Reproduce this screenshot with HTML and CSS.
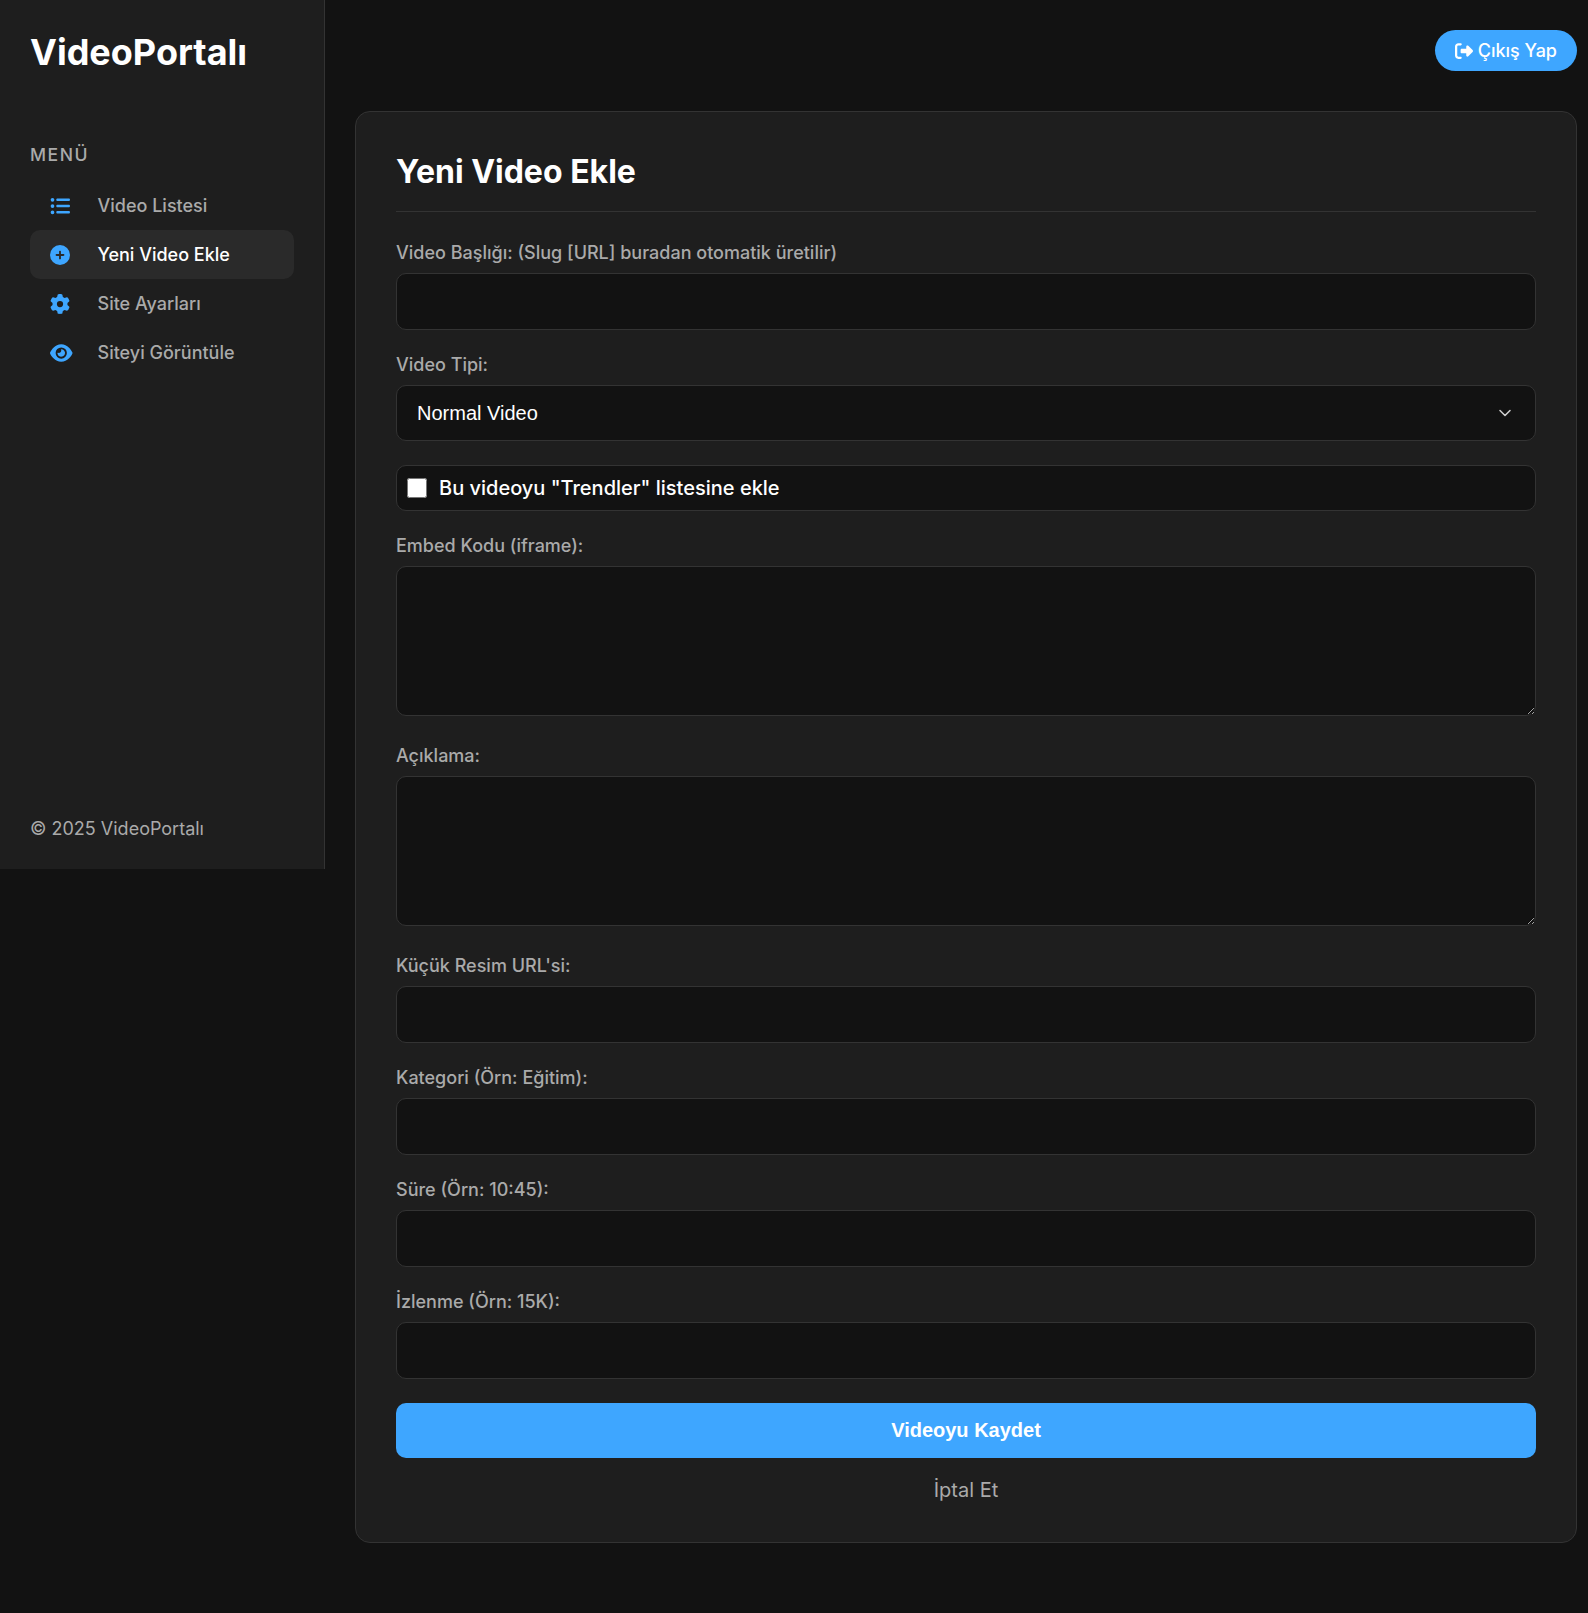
FILE: index.html
```html
<!DOCTYPE html>
<html lang="tr">
<head>
  <meta charset="UTF-8">
  <title>Yeni Video Ekle</title>
  <link rel="stylesheet" href="styles.css">
</head>
<body>
  <aside class="sidebar">
    <div class="logo">VideoPortalı</div>
    <div class="menu-title">MENÜ</div>
    <nav class="menu">
      <a class="menu-item" href="#">
        <span class="menu-icon"><svg viewBox="0 0 512 512"><path d="M64 144a48 48 0 1 0 0-96 48 48 0 1 0 0 96zM192 64c-17.7 0-32 14.3-32 32s14.3 32 32 32H480c17.7 0 32-14.3 32-32s-14.3-32-32-32H192zm0 160c-17.7 0-32 14.3-32 32s14.3 32 32 32H480c17.7 0 32-14.3 32-32s-14.3-32-32-32H192zm0 160c-17.7 0-32 14.3-32 32s14.3 32 32 32H480c17.7 0 32-14.3 32-32s-14.3-32-32-32H192zM64 464a48 48 0 1 0 0-96 48 48 0 1 0 0 96zm48-208a48 48 0 1 0 -96 0 48 48 0 1 0 96 0z"/></svg></span>
        Video Listesi
      </a>
      <a class="menu-item active" href="#">
        <span class="menu-icon"><svg viewBox="0 0 512 512"><path d="M256 512A256 256 0 1 0 256 0a256 256 0 1 0 0 512zM232 344V280H168c-13.3 0-24-10.7-24-24s10.7-24 24-24h64V168c0-13.3 10.7-24 24-24s24 10.7 24 24v64h64c13.3 0 24 10.7 24 24s-10.7 24-24 24H280v64c0 13.3-10.7 24-24 24s-24-10.7-24-24z"/></svg></span>
        Yeni Video Ekle
      </a>
      <a class="menu-item" href="#">
        <span class="menu-icon"><svg viewBox="0 0 512 512"><path d="M495.9 166.6c3.2 8.7 .5 18.4-6.4 24.6l-43.3 39.4c1.1 8.3 1.7 16.8 1.7 25.4s-.6 17.1-1.7 25.4l43.3 39.4c6.9 6.2 9.6 15.9 6.4 24.6c-4.4 11.9-9.7 23.3-15.8 34.3l-4.7 8.1c-6.6 11-14 21.4-22.1 31.2c-5.9 7.2-15.7 9.6-24.5 6.8l-55.7-17.7c-13.4 10.3-28.2 18.9-44 25.4l-12.5 57.1c-2 9.1-9 16.3-18.2 17.8c-13.8 2.3-28 3.5-42.5 3.5s-28.7-1.2-42.5-3.5c-9.2-1.5-16.2-8.7-18.2-17.8l-12.5-57.1c-15.8-6.5-30.6-15.1-44-25.4L83.1 425.9c-8.8 2.8-18.6 .3-24.5-6.8c-8.1-9.8-15.5-20.2-22.1-31.2l-4.7-8.1c-6.1-11-11.4-22.4-15.8-34.3c-3.2-8.7-.5-18.4 6.4-24.6l43.3-39.4C64.6 273.1 64 264.6 64 256s.6-17.1 1.7-25.4L22.4 191.2c-6.9-6.2-9.6-15.9-6.4-24.6c4.4-11.9 9.7-23.3 15.8-34.3l4.7-8.1c6.6-11 14-21.4 22.1-31.2c5.9-7.2 15.7-9.6 24.5-6.8l55.7 17.7c13.4-10.3 28.2-18.9 44-25.4l12.5-57.1c2-9.1 9-16.3 18.2-17.8C227.3 1.2 241.5 0 256 0s28.7 1.2 42.5 3.5c9.2 1.5 16.2 8.7 18.2 17.8l12.5 57.1c15.8 6.5 30.6 15.1 44 25.4l55.7-17.7c8.8-2.8 18.6-.3 24.5 6.8c8.1 9.8 15.5 20.2 22.1 31.2l4.7 8.1c6.1 11 11.4 22.4 15.8 34.3zM256 336a80 80 0 1 0 0-160 80 80 0 1 0 0 160z"/></svg></span>
        Site Ayarları
      </a>
      <a class="menu-item" href="#">
        <span class="menu-icon"><svg viewBox="0 0 576 512"><path d="M288 32c-80.8 0-145.5 36.8-192.6 80.6C48.6 156 17.3 208 2.5 243.7c-3.3 7.9-3.3 16.7 0 24.6C17.3 304 48.6 356 95.4 399.4C142.5 443.2 207.2 480 288 480s145.5-36.8 192.6-80.6c46.8-43.5 78.1-95.4 93-131.1c3.3-7.9 3.3-16.7 0-24.6c-14.9-35.7-46.2-87.7-93-131.1C433.5 68.8 368.8 32 288 32zM144 256a144 144 0 1 1 288 0 144 144 0 1 1 -288 0zm144-64c0 35.3-28.7 64-64 64c-7.1 0-13.9-1.2-20.3-3.3c-5.5-1.8-11.9 1.6-11.7 7.4c.3 6.9 1.3 13.8 3.2 20.7c13.7 51.2 66.4 81.6 117.6 67.9s81.6-66.4 67.9-117.6c-11.1-41.5-47.8-69.4-88.6-71.1c-5.8-.2-9.2 6.1-7.4 11.7c2.1 6.4 3.3 13.2 3.3 20.3z"/></svg></span>
        Siteyi Görüntüle
      </a>
    </nav>
    <div class="sidebar-footer">© 2025 VideoPortalı</div>
  </aside>

  <main class="main">
    <div class="topbar">
      <a class="logout" href="#">
        <svg viewBox="0 0 512 512"><path d="M377.9 105.9L500.7 228.7c7.2 7.2 11.3 17.1 11.3 27.3s-4.1 20.1-11.3 27.3L377.9 406.1c-6.4 6.4-15 9.9-24 9.9c-18.7 0-33.9-15.2-33.9-33.9l0-62.1-128 0c-17.7 0-32-14.3-32-32l0-64c0-17.7 14.3-32 32-32l128 0 0-62.1c0-18.7 15.2-33.9 33.9-33.9c9 0 17.6 3.6 24 9.9zM160 96L96 96c-17.7 0-32 14.3-32 32l0 256c0 17.7 14.3 32 32 32l64 0c17.7 0 32 14.3 32 32s-14.3 32-32 32l-64 0c-53 0-96-43-96-96L0 128C0 75 43 32 96 32l64 0c17.7 0 32 14.3 32 32s-14.3 32-32 32z"/></svg>
        Çıkış Yap
      </a>
    </div>

    <section class="card">
      <h1 class="card-title">Yeni Video Ekle</h1>
      <form class="form">
        <div class="form-group">
          <label class="form-label">Video Başlığı: (Slug [URL] buradan otomatik üretilir)</label>
          <input class="form-control" type="text">
        </div>
        <div class="form-group">
          <label class="form-label">Video Tipi:</label>
          <select class="form-control form-select">
            <option>Normal Video</option>
          </select>
        </div>
        <div class="form-group">
          <label class="check-row">
            <input class="check-box" type="checkbox">
            Bu videoyu "Trendler" listesine ekle
          </label>
        </div>
        <div class="form-group">
          <label class="form-label">Embed Kodu (iframe):</label>
          <textarea class="form-control form-area"></textarea>
        </div>
        <div class="form-group">
          <label class="form-label">Açıklama:</label>
          <textarea class="form-control form-area"></textarea>
        </div>
        <div class="form-group">
          <label class="form-label">Küçük Resim URL'si:</label>
          <input class="form-control" type="text">
        </div>
        <div class="form-group">
          <label class="form-label">Kategori (Örn: Eğitim):</label>
          <input class="form-control" type="text">
        </div>
        <div class="form-group">
          <label class="form-label">Süre (Örn: 10:45):</label>
          <input class="form-control" type="text">
        </div>
        <div class="form-group">
          <label class="form-label">İzlenme (Örn: 15K):</label>
          <input class="form-control" type="text">
        </div>
        <button class="submit-btn" type="button">Videoyu Kaydet</button>
        <a class="cancel-link" href="#">İptal Et</a>
      </form>
    </section>
  </main>
</body>
</html>
```

FILE: styles.css
```css
html, body {
  margin: 0;
  padding: 0;
  background: #121212;
  font-family: "Inter", sans-serif;
  color: #fff;
}
body {
  display: flex;
  align-items: flex-start;
}
a {
  text-decoration: none;
}

/* sidebar */
.sidebar {
  width: 325px;
  height: 869px;
  box-sizing: border-box;
  flex-shrink: 0;
  display: flex;
  flex-direction: column;
  padding: 30px 30px 29px;
  background: #1e1e1e;
  border-right: 1px solid #333;
}
.logo {
  font-size: 36px;
  font-weight: 700;
  line-height: 44px;
  margin-bottom: 70px;
}
.menu-title {
  font-size: 17.6px;
  font-weight: 500;
  letter-spacing: 1.5px;
  line-height: 21px;
  color: #aaa;
  margin-bottom: 16px;
}
.menu {
  display: flex;
  flex-direction: column;
}
.menu-item {
  display: flex;
  align-items: center;
  height: 49px;
  padding-left: 20px;
  border-radius: 10px;
  font-size: 18px;
  font-weight: 500;
  color: #aaa;
}
.menu-item.active {
  background: #2a2a2a;
  color: #fff;
}
.menu-icon {
  display: flex;
  width: 47.5px;
  flex-shrink: 0;
}
.menu-icon svg {
  height: 20px;
  fill: #3ea6ff;
}
.sidebar-footer {
  margin-top: auto;
  font-size: 18px;
  line-height: 22px;
  color: #aaa;
}

/* main */
.main {
  flex: 1;
  min-width: 0;
  padding: 30px 11px 70px 30px;
}
.topbar {
  display: flex;
  justify-content: flex-end;
  margin-bottom: 40px;
}
.logout {
  display: flex;
  align-items: center;
  gap: 5px;
  height: 41px;
  padding: 0 20px;
  border-radius: 21px;
  background: #3ea6ff;
  color: #fff;
  font-size: 18px;
  font-weight: 500;
}
.logout svg {
  height: 18px;
  fill: #fff;
}
.card {
  box-sizing: border-box;
  background: #1e1e1e;
  border: 1px solid #333;
  border-radius: 15px;
  padding: 40px;
}
.card-title {
  margin: 0 0 30px;
  padding-bottom: 20px;
  border-bottom: 1px solid #333;
  font-size: 32px;
  line-height: 39px;
  font-weight: 700;
}
.form-group {
  margin-bottom: 24px;
}
.form-label {
  display: block;
  margin-bottom: 9px;
  font-size: 18px;
  line-height: 22px;
  font-weight: 500;
  color: #aaa;
}
.form-control {
  display: block;
  width: 100%;
  height: 57px;
  box-sizing: border-box;
  padding: 15px 20px;
  background: #121212;
  border: 1px solid #333;
  border-radius: 10px;
  color: #fff;
  font-size: 18px;
}
.form-select {
  height: 56px;
  padding: 0 20px;
  font-family: "Liberation Sans", sans-serif;
  font-size: 20px;
  appearance: none;
  background-image: url("data:image/svg+xml,%3Csvg xmlns='http://www.w3.org/2000/svg' viewBox='0 0 16 16'%3E%3Cpath fill='none' stroke='%23ccc' stroke-width='1.6' stroke-linecap='round' stroke-linejoin='round' d='M3 5.5l5 5 5-5'/%3E%3C/svg%3E");
  background-repeat: no-repeat;
  background-position: right 22px center;
  background-size: 16px 16px;
}
.form-area {
  display: inline-block;
  vertical-align: baseline;
  height: 150px;
  margin-bottom: 1px;
  color-scheme: dark;
}
.check-row {
  display: flex;
  align-items: center;
  gap: 12px;
  height: 46px;
  box-sizing: border-box;
  padding: 0 10px;
  background: #121212;
  border: 1px solid #333;
  border-radius: 10px;
  font-size: 20px;
  font-weight: 500;
}
.check-box {
  width: 20px;
  height: 20px;
  margin: 0;
}
.submit-btn {
  display: block;
  width: 100%;
  height: 55px;
  border: none;
  border-radius: 10px;
  background: #3ea6ff;
  color: #fff;
  font-family: "Liberation Sans", sans-serif;
  font-size: 20px;
  font-weight: 700;
}
.cancel-link {
  display: block;
  margin-top: 20px;
  text-align: center;
  font-size: 20px;
  line-height: 24px;
  color: #aaa;
}
```
